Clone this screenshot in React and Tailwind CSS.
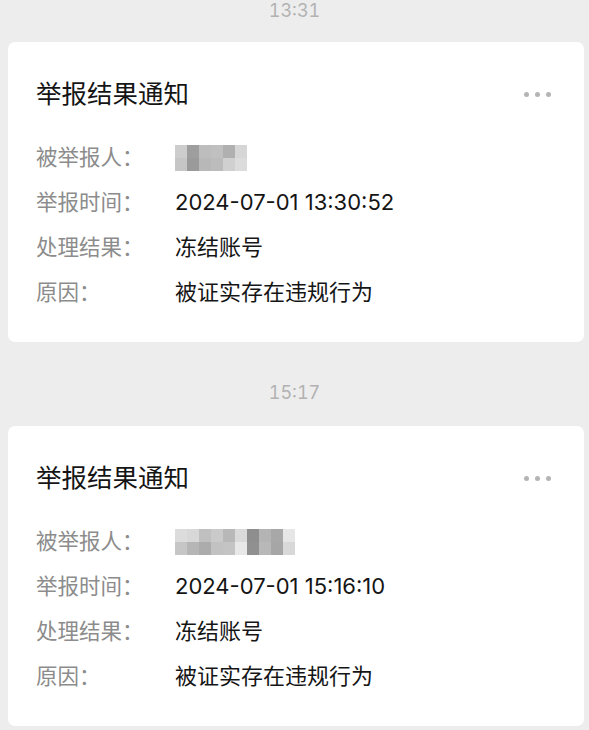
import React from "react";

const font = { fontFamily: 'Inter, "Noto Sans CJK SC", sans-serif' };

function Blur({ cols }) {
  const w = cols[0].length * 12;
  return (
    <svg width={w} height="26" viewBox={`0 0 ${w} 26`} className="block">
      <defs>
        <filter id="b" x="-10%" y="-20%" width="120%" height="140%">
          <feGaussianBlur stdDeviation="0.6" />
        </filter>
      </defs>
      <g filter="url(#b)">
        {cols.map((row, r) =>
          row.map((c, i) => (
            <rect key={r + "-" + i} x={i * 12} y={r * 13} width="12.5" height="13.5" fill={c} />
          ))
        )}
      </g>
    </svg>
  );
}

const blur1 = [
  ["#cdcdcd", "#9e9e9e", "#bdbdbd", "#c0c0c0", "#b0b0b0", "#d6d6d6"],
  ["#c6c6c6", "#9a9a9a", "#b8b8b8", "#bcbcbc", "#d0d0d0", "#dcdcdc"],
];
const blur2 = [
  ["#dcdcdc", "#d8d8d8", "#c0c0c0", "#cacaca", "#b8b8b8", "#dadada", "#8e8e8e", "#b4b4b4", "#a8a8a8", "#e6e6e6"],
  ["#c6c6c6", "#b6b6b6", "#acacac", "#c2c2c2", "#c4c4c4", "#e8e8e8", "#909090", "#b8b8b8", "#a6a6a6", "#d8d8d8"],
];

function Row({ label, children }) {
  return (
    <div className="flex h-[45px] items-center">
      <div className="w-[139px] shrink-0 text-[21.5px] text-[#8c8c8c]">{label}</div>
      <div className="text-[22px] text-[#151515]">{children}</div>
    </div>
  );
}

function Card({ blur, time }) {
  return (
    <div className="ml-[8px] mr-[5px] rounded-[7px] bg-white pl-[28px] pr-[33px] pt-[37px] pb-[27px]">
      <div className="flex h-[30px] items-center justify-between">
        <div className="text-[25.5px] leading-[30px] text-[#151515]">举报结果通知</div>
        <div className="flex gap-[6px]">
          <span className="h-[5px] w-[5px] rounded-full bg-[#b4b4b4]" />
          <span className="h-[5px] w-[5px] rounded-full bg-[#b4b4b4]" />
          <span className="h-[5px] w-[5px] rounded-full bg-[#b4b4b4]" />
        </div>
      </div>
      <div className="mt-[26px]">
        <Row label="被举报人：">
          <Blur cols={blur} />
        </Row>
        <Row label="举报时间：">{time}</Row>
        <Row label="处理结果：">冻结账号</Row>
        <Row label="原因：">被证实存在违规行为</Row>
      </div>
    </div>
  );
}

export default function App() {
  return (
    <div className="h-[730px] w-[589px] overflow-hidden bg-[#ededed]" style={font}>
      <div className="mt-[1px] mb-[21px] text-center text-[18px] leading-[20px] text-[#b2b2b2] tabular-nums">13:31</div>
      <Card blur={blur1} time="2024-07-01 13:30:52" />
      <div className="mt-[41px] mb-[23px] text-center text-[18px] leading-[20px] text-[#b2b2b2] tabular-nums">15:17</div>
      <Card blur={blur2} time="2024-07-01 15:16:10" />
    </div>
  );
}
